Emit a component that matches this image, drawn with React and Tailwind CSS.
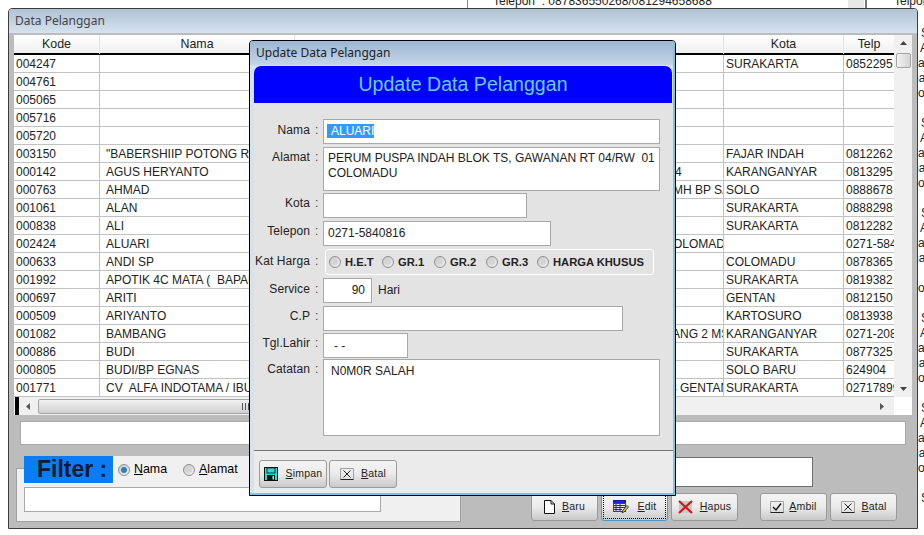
const rows = [
  ['004247', '', '', '', 'SURAKARTA', '0852295'],
  ['004761', '', '', '', '', ''],
  ['005065', '', '', '', '', ''],
  ['005716', '', '', '', '', ''],
  ['005720', '', '', '', '', ''],
  ['003150', '"BABERSHIIP POTONG RAMBUT', '', '', 'FAJAR INDAH', '0812262'],
  ['000142', 'AGUS HERYANTO', '4', 'pl-[380px]', 'KARANGANYAR', '0813295'],
  ['000763', 'AHMAD', 'MH BP SARI', 'pl-[378px]', 'SOLO', '0888678'],
  ['001061', 'ALAN', '', '', 'SURAKARTA', '0888298'],
  ['000838', 'ALI', '', '', 'SURAKARTA', '0812282'],
  ['002424', 'ALUARI', 'OLOMADU', 'pl-[378px]', '', '0271-5840816'],
  ['000633', 'ANDI SP', '', '', 'COLOMADU', '0878365'],
  ['001992', 'APOTIK 4C MATA (  BAPAK', '', '', 'SURAKARTA', '0819382'],
  ['000697', 'ARITI', '', '', 'GENTAN', '0812150'],
  ['000509', 'ARIYANTO', '', '', 'KARTOSURO', '0813938'],
  ['001082', 'BAMBANG', 'ANG 2 MS', 'pl-[377px]', 'KARANGANYAR', '0271-208'],
  ['000886', 'BUDI', '', '', 'SURAKARTA', '0877325'],
  ['000805', 'BUDI/BP EGNAS', '', '', 'SOLO BARU', '624904'],
  ['001771', 'CV  ALFA INDOTAMA / IBU', '3 GENTAN', 'pl-[375px]', 'SURAKARTA', '02717899'],
]

const sideLines = ['S', 'A', 'a', 'ha', 'o', '', 'S', 'A', 'a', 'ha', 'o', '', 'S', 'A', 'a', 'ha', '', 'o', '', 'S', 'A', 'a', 'ha', 'o', '', 'S', 'A', 'a', 'ha', 'o', '', 'S']

// the other window's text runs in behind the main window, so each letter starts a little differently
const sideLineClass = { S: 'pl-[3px]', A: 'pl-[2px]', a: 'pl-0', ha: '-ml-[6px]', o: 'pl-0', '': '' }

function FloppyIcon() {
  return (
    <svg width="14" height="14" viewBox="0 0 14 14">
      <rect x="0.5" y="0.5" width="13" height="13" fill="#35d6d6" stroke="#111" />
      <rect x="3" y="1" width="8" height="5" fill="#35d6d6" stroke="#111" strokeWidth="0.8" />
      <rect x="3" y="8" width="8" height="5.5" fill="#111" />
      <rect x="8.5" y="9" width="1.5" height="3.5" fill="#9ee" />
    </svg>
  )
}

function PageIcon() {
  return (
    <svg width="11" height="14" viewBox="0 0 11 14" fill="#fff" stroke="#111">
      <path d="M0.5 0.5H7L10.5 4V13.5H0.5Z" />
      <path d="M7 0.5V4H10.5" fill="none" />
    </svg>
  )
}

function EditIcon() {
  return (
    <svg width="16" height="14" viewBox="0 0 16 14">
      <rect x="0.5" y="0.5" width="12" height="3" fill="#2222cc" stroke="#1a1a8a" />
      <path d="M1 5.5H12M1 7.5H12M1 9.5H9M3 3.5V11M7 3.5V11" stroke="#2222cc" strokeWidth="1" fill="none" />
      <rect x="0.5" y="3.5" width="12" height="8" fill="none" stroke="#444" />
      <path d="M9 13L10 10L14 5.5L15.5 7L11.5 11.5Z" fill="#d8c060" stroke="#222" strokeWidth="0.8" />
    </svg>
  )
}

function RedXIcon() {
  return (
    <svg width="15" height="14" viewBox="0 0 15 14">
      <rect x="1" y="1" width="13" height="12" fill="#c9c9c9" />
      <path d="M1 1L14 13M14 1L1 13" stroke="#d01818" strokeWidth="2.2" fill="none" />
    </svg>
  )
}

function CheckIcon() {
  return (
    <svg width="14" height="12" viewBox="0 0 14 12" fill="none">
      <path d="M0.5 11.5V0.5H13.5V11.5" stroke="#a0a0a0" />
      <path d="M3 6L6 9L11 2.5" stroke="#111" strokeWidth="1.4" />
      <path d="M0.5 11.5H13.5" stroke="#222" />
    </svg>
  )
}

function CrossBoxIcon() {
  return (
    <svg width="14" height="12" viewBox="0 0 14 12" fill="none">
      <path d="M0.5 11.5V0.5H13.5V11.5" stroke="#a0a0a0" />
      <path d="M3.5 2.5L10.5 9.5M10.5 2.5L3.5 9.5" stroke="#222" />
      <path d="M0.5 11.5H13.5" stroke="#222" />
    </svg>
  )
}

function Radio({ checked }) {
  return (
    <span className="w-[12px] h-[12px] shrink-0 rounded-full border border-[#8e8e8e] bg-gradient-to-br from-[#c8c8c8] to-[#f4f4f4] flex items-center justify-center">
      {checked ? <span className="w-[6px] h-[6px] rounded-full bg-[#2f7fb8]" /> : <span className="w-[6px] h-[6px] rounded-full bg-[#d4d4d4]" />}
    </span>
  )
}

function ActionButton({ icon, mnemonic, rest, gap = 'gap-[7px]', width = 'w-[67px]', focused }) {
  return (
    <button
      className={`h-[28px] rounded-[3px] border bg-gradient-to-b from-[#f4f4f4] via-[#ebebeb] to-[#c9c9c9] flex items-center justify-center text-[10.5px] tracking-[0.2px] text-[#222] ${width} ${gap} ${
        focused ? 'border-[#4a9cc4] outline-1 outline-dotted outline-black -outline-offset-3' : 'border-[#9a9a9a]'
      }`}
    >
      {icon}
      <span><u>{mnemonic}</u>{rest}</span>
    </button>
  )
}

function FormRow({ label, labelClass = 'pt-[3px]', className = '', children }) {
  return (
    <div className={`flex items-start ${className}`}>
      <span className={`w-[56px] text-right whitespace-nowrap leading-[14px] tracking-[0.1px] text-[#222] ${labelClass}`}>{label}</span>
      <span className={`w-[13px] pl-[5px] leading-[14px] text-[#444] ${labelClass}`}>:</span>
      {children}
    </div>
  )
}

function Field({ className = '', children }) {
  return (
    <div className={`bg-white border border-[#a9a9a9] px-[4px] text-[#222] leading-[15px] ${className}`}>{children}</div>
  )
}

function PriceOption({ label }) {
  return (
    <span className="flex items-center gap-[4px]">
      <Radio />
      <span className="font-bold text-[11.2px] whitespace-nowrap text-[#222]">{label}</span>
    </span>
  )
}

function UpdateDialog() {
  return (
    <div className="absolute left-[249px] top-[40px] w-[427px] h-[456px] border border-black rounded-t-[4px] overflow-hidden flex flex-col">
      <div className="flex-1 flex flex-col border-r-[2px] border-b-[2px] border-[#7cc4e0] min-h-0">
        <div className="h-[24px] shrink-0 pl-[6px] flex items-center bg-gradient-to-b from-[#9db6d2] to-[#c3d5e8] font-['Noto_Sans'] text-[12px] text-[#222]">
          Update Data Pelanggan
        </div>
        <div className="flex-1 flex flex-col pl-[4px] pt-[1px] bg-[#d6e2ec] min-h-0">
          <div className="h-[37px] shrink-0 mr-[1px] bg-[#0000ff] rounded-t-[7px] flex items-center justify-center text-[19.6px] text-[#66ccff]">
            Update Data Pelanggan
          </div>
          <div className="flex-1 flex flex-col bg-[#e3e3e3] text-[12px] pt-[16px] min-h-0">
            <FormRow label="Nama" labelClass="pt-[4px]">
              <Field className="w-[337px] h-[25px] pt-[4px] pl-[3px]">
                <span className="bg-[#3399ff] text-white pl-[4px] inline-block h-[14px] leading-[14px]">ALUARI</span>
              </Field>
            </FormRow>
            <FormRow label="Alamat" className="mt-[3px]">
              <Field className="w-[337px] h-[44px] pt-[3px]">
                <p className="whitespace-pre">PERUM PUSPA INDAH BLOK TS, GAWANAN RT 04/RW  01</p>
                <p>COLOMADU</p>
              </Field>
            </FormRow>
            <FormRow label="Kota" className="mt-[2px]">
              <Field className="w-[204px] h-[25px]" />
            </FormRow>
            <FormRow label="Telepon" className="mt-[3px]">
              <Field className="w-[228px] h-[25px] pt-[4px]">0271-5840816</Field>
            </FormRow>
            <FormRow label="Kat Harga" labelClass="pt-[5px]" className="mt-[3px]">
              <div className="ml-[2px] w-[329px] h-[26px] border border-white rounded-[3px] pl-[3px] grid grid-cols-[53px_52px_52px_51px_auto] items-center">
                <PriceOption label="H.E.T" />
                <PriceOption label="GR.1" />
                <PriceOption label="GR.2" />
                <PriceOption label="GR.3" />
                <PriceOption label="HARGA KHUSUS" />
              </div>
            </FormRow>
            <FormRow label="Service" labelClass="pt-[4px]" className="mt-[3px]">
              <Field className="w-[49px] h-[25px] pt-[4px] text-right pr-[6px]">90</Field>
              <span className="ml-[6px] pt-[5px] leading-[14px] text-[#222]">Hari</span>
            </FormRow>
            <FormRow label="C.P" className="mt-[3px]">
              <Field className="w-[300px] h-[25px]" />
            </FormRow>
            <FormRow label="Tgl.Lahir" className="mt-[2px]">
              <Field className="w-[85px] h-[25px] pt-[5px] pl-[10px] whitespace-pre">- -</Field>
            </FormRow>
            <FormRow label="Catatan" className="mt-[1px]">
              <Field className="w-[337px] h-[77px] pt-[4px] pl-[7px]">N0M0R SALAH</Field>
            </FormRow>
          </div>
          <div className="h-[43px] shrink-0 border-t border-[#777] bg-[#ebebeb] pl-[5px] pt-[9px] flex gap-[2px] items-start">
            <ActionButton icon={<FloppyIcon />} mnemonic="S" rest="impan" gap="gap-[8px]" width="w-[68px]" />
            <ActionButton icon={<CrossBoxIcon />} mnemonic="B" rest="atal" width="w-[68px]" />
          </div>
        </div>
      </div>
    </div>
  )
}

function CustomerTable() {
  return (
    <div className="h-[380px] shrink-0 flex bg-white">
      <div className="w-[880px] flex flex-col">
        <div className="h-[20px] shrink-0 grid grid-cols-[86px_195px_429px_120px_50px] border-b-2 border-black bg-gradient-to-b from-white to-[#f0f0f0] text-center text-[12.4px] leading-[19px] text-[#222]">
          <span className="border-r border-[#e2e2e2]">Kode</span>
          <span className="border-r border-[#e2e2e2]">Nama</span>
          <span className="border-r border-[#e2e2e2] overflow-hidden pt-[6px]">Alamat</span>
          <span className="border-r border-[#e2e2e2]">Kota</span>
          <span>Telp</span>
        </div>
        {rows.map(([kode, nama, alamat, alamatPad, kota, telp]) => (
          <div key={kode} className="h-[18px] shrink-0 grid grid-cols-[86px_195px_429px_120px_50px] border-b border-[#c2c2c2] text-[12px] leading-[18px] text-[#222] whitespace-pre">
            <span className="pl-[2px] border-r border-[#c2c2c2] overflow-hidden">{kode}</span>
            <span className="pl-[6px] border-r border-[#c2c2c2] overflow-hidden">{nama}</span>
            <span className={`border-r border-[#c2c2c2] overflow-hidden ${alamatPad}`}>{alamat}</span>
            <span className="pl-[2px] border-r border-[#c2c2c2] overflow-hidden">{kota}</span>
            <span className="pl-[2px] overflow-hidden">{telp}</span>
          </div>
        ))}
        {/* horizontal scrollbar */}
        <div className="flex-1 flex items-center bg-[#f0f0f0]">
          <span className="ml-[1px] w-[4px] h-full bg-black" />
          <span className="w-[19px] flex justify-center">
            <svg width="5" height="7" viewBox="0 0 5 7"><path d="M4 0V7L0 3.5Z" fill="#555" /></svg>
          </span>
          <div className="w-[414px] h-[15px] border border-[#a4a4a4] rounded-[2px] bg-gradient-to-b from-[#f2f2f2] to-[#cfcfcf] flex items-center justify-center">
            <svg width="7" height="7" viewBox="0 0 7 7"><path d="M0.5 0V7M3.5 0V7M6.5 0V7" stroke="#555" fill="none" /></svg>
          </div>
          <span className="flex-1" />
          <span className="w-[14px]">
            <svg width="5" height="7" viewBox="0 0 5 7"><path d="M0 0V7L4 3.5Z" fill="#555" /></svg>
          </span>
        </div>
      </div>
      {/* vertical scrollbar */}
      <div className="w-[18px] flex flex-col">
        <div className="h-[362px] bg-[#f0f0f0] flex flex-col items-center">
          <svg className="mt-[6px]" width="7" height="5" viewBox="0 0 7 5"><path d="M0 4H7L3.5 0Z" fill="#444" /></svg>
          <div className="mt-[7px] w-[15px] h-[15px] border border-[#a4a4a4] rounded-[2px] bg-gradient-to-r from-[#f2f2f2] to-[#d4d4d4]" />
          <div className="flex-1" />
          <svg className="mb-[6px]" width="7" height="5" viewBox="0 0 7 5"><path d="M0 1H7L3.5 5Z" fill="#444" /></svg>
        </div>
      </div>
    </div>
  )
}

function FilterBox() {
  return (
    <div className="relative w-[445px] ml-[2px] pt-[12px]">
      <div className="h-[54px] bg-[#f0f0f0] border border-[#a0a0a0] pl-[7px] pt-[18px]">
        <div className="w-[357px] h-[25px] bg-white border border-[#a9a9a9]" />
      </div>
      {/* legend sits over the box border */}
      <div className="absolute left-[8px] top-0 flex h-[27px] bg-[#f0f0f0] w-[350px]">
        <span className="w-[89px] pl-[13px] bg-[#0a7df5] font-bold text-[23px] leading-[27px] whitespace-pre text-[#111a33]">Filter :</span>
        <span className="flex items-center gap-[4px] ml-[5px]">
          <Radio checked />
          <span className="text-[12.4px]"><u>N</u>ama</span>
        </span>
        <span className="flex items-center gap-[4px] ml-[16px]">
          <Radio />
          <span className="text-[12.4px]"><u>A</u>lamat</span>
        </span>
      </div>
    </div>
  )
}

function MainWindow() {
  return (
    <div className="absolute left-[8px] top-[8px] w-[910px] h-[521px] border border-[#3c3c3c] rounded-t-[4px] overflow-hidden flex flex-col">
      <div className="h-[24px] shrink-0 pl-[6px] flex items-center bg-gradient-to-b from-[#b0c2d5] to-[#d6e2ef] font-['Noto_Sans'] text-[12px] text-[#444]">
        Data Pelanggan
      </div>
      <div className="flex-1 flex flex-col bg-[#bcbcbc] px-[5px] pt-[2px]">
        <CustomerTable />
        <div className="mt-[6px] ml-[6px] mr-[6px] h-[24px] shrink-0 bg-white border border-[#a9a9a9]" />
        <div className="mt-[11px] flex">
          <FilterBox />
          <div className="flex-1 flex flex-col items-end">
            <div className="mt-[1px] mr-[99px] w-[300px] h-[30px] bg-white border border-[#6e6e6e]" />
            <div className="mt-[6px] mr-[15px] flex">
              <div className="flex gap-[3px]">
                <ActionButton icon={<PageIcon />} mnemonic="B" rest="aru" />
                <ActionButton icon={<EditIcon />} mnemonic="E" rest="dit" gap="gap-[9px]" focused />
                <ActionButton icon={<RedXIcon />} mnemonic="H" rest="apus" />
              </div>
              <div className="ml-[22px] flex gap-[3px]">
                <ActionButton icon={<CheckIcon />} mnemonic="A" rest="mbil" gap="gap-[5px]" />
                <ActionButton icon={<CrossBoxIcon />} mnemonic="B" rest="atal" />
              </div>
            </div>
          </div>
        </div>
      </div>
    </div>
  )
}

function BackgroundWindow() {
  return (
    <>
      <div className="absolute left-0 right-0 top-[-5px] h-[13px] flex text-[12px] leading-[13px] text-[#222] whitespace-pre">
        <span className="ml-[467px] w-[1px] shrink-0 bg-[#888]" />
        <span className="ml-[25px] w-[355px] shrink-0">Telepon  : 087836550268/081294658688</span>
        <span className="w-[16px] shrink-0 bg-[#e8e8e8]" />
        <span className="ml-[1px] w-[2px] shrink-0 bg-[#777]" />
        <span className="ml-[27px] shrink-0">Telpon</span>
      </div>
      <div className="absolute left-[918px] top-[26px] text-[12px] leading-[15px] text-[#222]">
        {sideLines.map((line, i) => (
          <p key={i} className={`h-[15px] ${sideLineClass[line]}`}>{line}</p>
        ))}
      </div>
    </>
  )
}

export default function App() {
  return (
    <div className="relative w-[924px] h-[535px] overflow-hidden bg-white font-['Liberation_Sans',Arial,sans-serif]">
      <BackgroundWindow />
      <MainWindow />
      <UpdateDialog />
    </div>
  )
}
